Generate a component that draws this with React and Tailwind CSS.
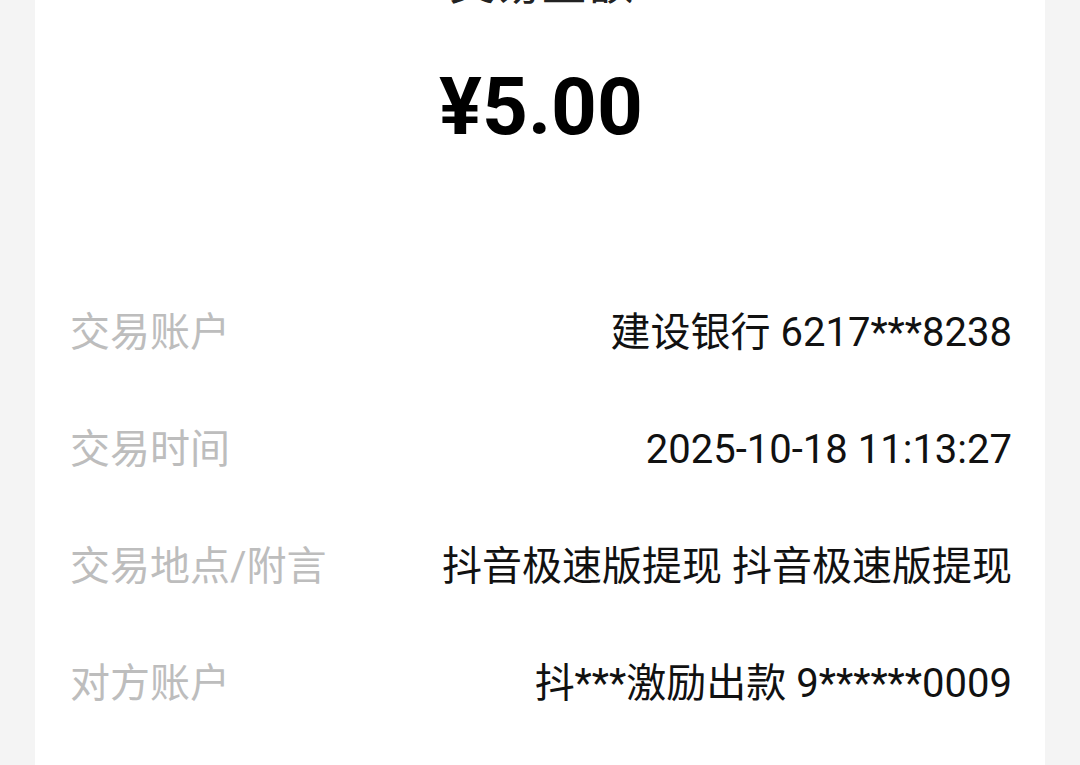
import React from 'react';

const rows = [
  { label: '交易账户', value: '建设银行 6217***8238' },
  { label: '交易时间', value: '2025-10-18 11:13:27' },
  { label: '交易地点/附言', value: '抖音极速版提现 抖音极速版提现' },
  { label: '对方账户', value: '抖***激励出款 9******0009' },
];

const font = { fontFamily: 'Roboto, "Noto Sans CJK SC", sans-serif' };

const App = () => {
  return (
    <div className="h-[765px] overflow-hidden bg-[#f4f4f4]" style={font}>
      <div className="mx-[35px] flow-root h-full bg-white pl-[35px] pr-[33px]">
        <p className="-mt-[40px] text-center text-[46px] leading-none text-[#222]">交易金额</p>
        <p className="mt-[61px] text-center text-[80px] font-bold leading-none text-black">¥5.00</p>
        <div className="mt-[127px] flex flex-col">
          {rows.map((row) => (
            <div key={row.label} className="flex h-[117px] items-center justify-between text-[40px] leading-none">
              <span className="text-[#bdbdbd]">{row.label}</span>
              <span className="text-[#111]">{row.value}</span>
            </div>
          ))}
        </div>
      </div>
    </div>
  );
};

export default App;
